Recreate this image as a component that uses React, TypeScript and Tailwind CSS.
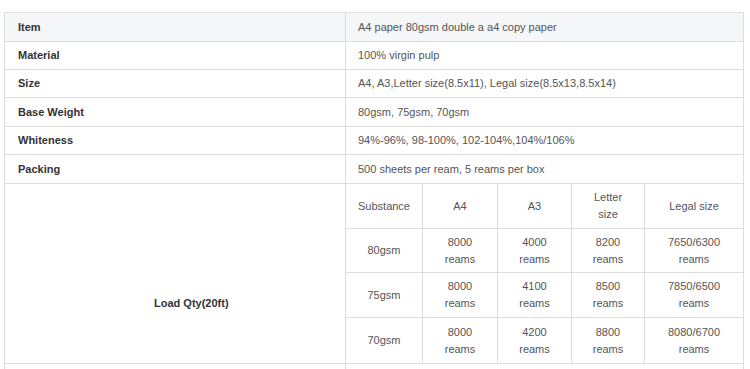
import React from "react";

const rows: { label: string; value: string; h: string; head?: boolean }[] = [
  { label: "Item", value: "A4 paper 80gsm double a a4 copy paper", h: "h-[29px]", head: true },
  { label: "Material", value: "100% virgin pulp", h: "h-[28px]" },
  { label: "Size", value: "A4, A3,Letter size(8.5x11), Legal size(8.5x13,8.5x14)", h: "h-[28px]" },
  { label: "Base Weight", value: "80gsm, 75gsm, 70gsm", h: "h-[29px]" },
  { label: "Whiteness", value: "94%-96%, 98-100%, 102-104%,104%/106%", h: "h-[28px]" },
  { label: "Packing", value: "500 sheets per ream, 5 reams per box", h: "h-[29px]" },
];

const widths = ["w-[77px]", "w-[75px]", "w-[74px]", "w-[73px]", "w-[99px]"];
const heights = ["h-[45px]", "h-[44px]", "h-[45px]", "h-[46px]"];

const inner: string[][] = [
  ["Substance", "A4", "A3", "Letter size", "Legal size"],
  ["80gsm", "8000 reams", "4000 reams", "8200 reams", "7650/6300 reams"],
  ["75gsm", "8000 reams", "4100 reams", "8500 reams", "7850/6500 reams"],
  ["70gsm", "8000 reams", "4200 reams", "8800 reams", "8080/6700 reams"],
];

export default function App() {
  return (
    <div
      className="w-[750px] h-[369px] overflow-hidden bg-white pt-[12px] pl-[4px]"
      style={{ fontFamily: '"Liberation Sans", Arial, sans-serif' }}
    >
      <div className="w-[740px] border-l border-t border-[#dedede] text-[11px]">
        {rows.map((r) => (
          <div key={r.label} className={`flex ${r.h} ${r.head ? "bg-[#f5f6f8]" : ""}`}>
            <div className="w-[341px] shrink-0 border-r border-b border-[#dedede] flex items-center pl-[13px] font-bold text-[#333]">
              {r.label}
            </div>
            <div className="w-[398px] shrink-0 border-r border-b border-[#dedede] flex items-center pl-[12px] text-[#555]">
              {r.value}
            </div>
          </div>
        ))}
        <div className="flex">
          <div className="w-[341px] shrink-0 border-r border-b border-[#dedede] pl-[149px] pt-[111px] font-bold text-[#333]">
            Load Qty(20ft)
          </div>
          <div className="w-[398px] shrink-0 flex flex-col">
            {inner.map((row, ri) => (
              <div key={ri} className={`flex ${heights[ri]}`}>
                {row.map((c, ci) => (
                  <div
                    key={ci}
                    className={`${widths[ci]} shrink-0 border-r border-b border-[#dedede] flex items-center justify-center text-center leading-[17px] text-[#555] px-[6px]`}
                  >
                    <span className={ci === 3 && ri === 0 ? "w-[40px]" : ci > 0 && ri > 0 ? "w-[56px]" : ""}>{c}</span>
                  </div>
                ))}
              </div>
            ))}
          </div>
        </div>
        <div className="flex h-[29px]">
          <div className="w-[341px] shrink-0 border-r border-b border-[#dedede]" />
          <div className="w-[398px] shrink-0 border-r border-b border-[#dedede]" />
        </div>
      </div>
    </div>
  );
}
